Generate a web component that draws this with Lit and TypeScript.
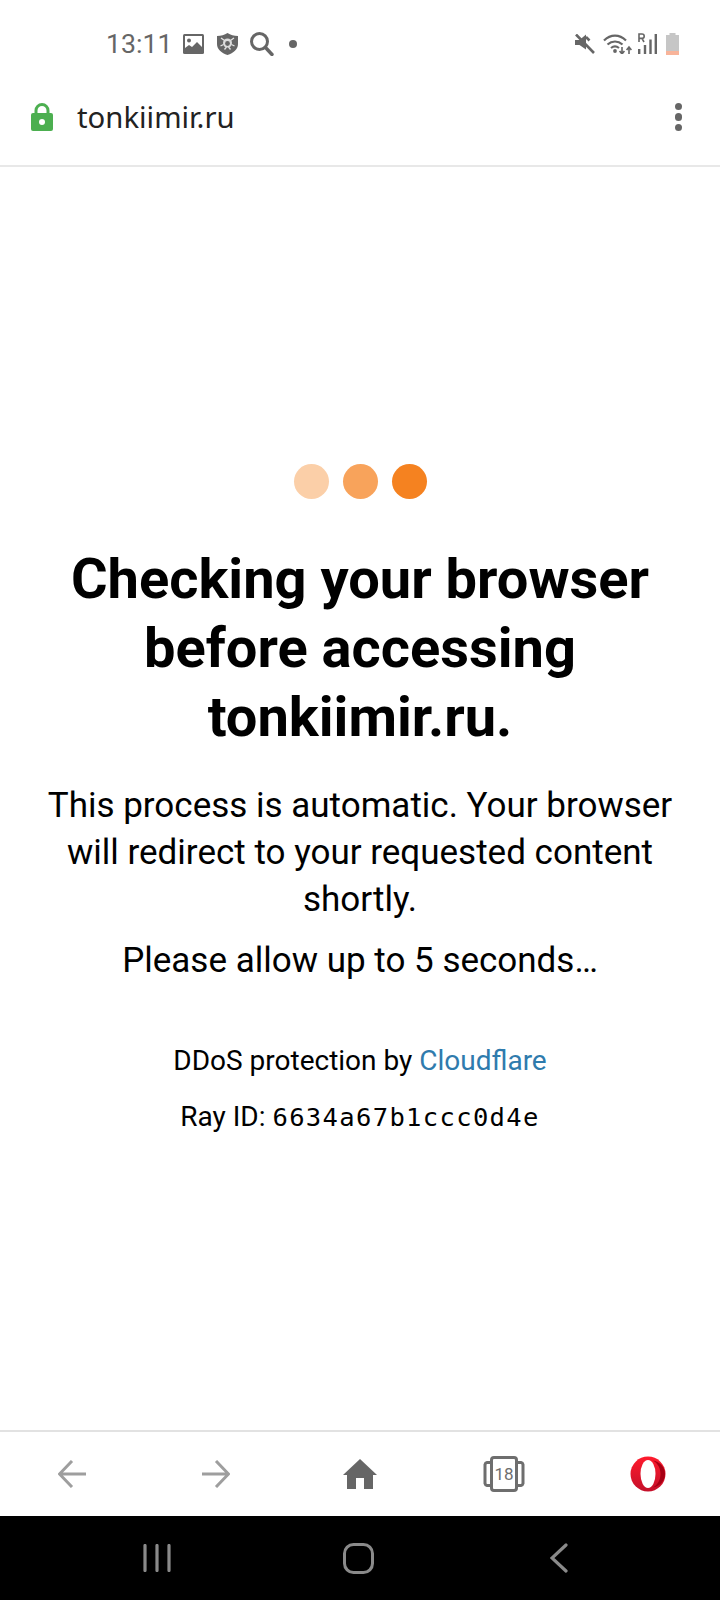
import { LitElement, html, css } from "lit";
import { customElement } from "lit/decorators.js";

@customElement("app-root")
export class AppRoot extends LitElement {
  static styles = css`
    :host { display: block; width: 720px; height: 1600px; background: #fff; font-family: Roboto, sans-serif; color: #000; overflow: hidden; }
    .page { display: flex; flex-direction: column; height: 1600px; }
    .status { height: 78px; flex: none; display: flex; align-items: center; padding: 10px 0 0 106px; box-sizing: border-box; color: #666; }
    .time { font-size: 26.7px; width: 77px; color: #666; line-height: 1; }
    .status svg { display: block; flex: none; }
    .left-icons { display: flex; align-items: center; }
    .lion { margin-left: 13px; }
    .search { margin-left: 12px; }
    .sdot { margin-left: 17px; }
    .right-icons { margin-left: auto; margin-right: 41px; display: flex; align-items: center; }
    .wifi { margin-left: 8px; }
    .signal { margin-left: 6px; }
    .battery { margin-left: 9px; }
    .address { height: 89px; flex: none; display: flex; align-items: center; padding: 0 0 10px 31px; box-sizing: border-box; border-bottom: 2px solid #e8e8e8; }
    .url { font-family: "Noto Sans", sans-serif; font-size: 29.3px; color: #222; margin-left: 24px; }
    .menu { margin: 1px 38px 0 auto; display: flex; flex-direction: column; gap: 3px; }
    .menu i { display: block; width: 7.5px; height: 7.5px; border-radius: 50%; background: #666; }
    .content { flex: 1; display: flex; flex-direction: column; align-items: center; padding: 297px 32px 0; text-align: center; }
    .dots { display: flex; gap: 14px; margin-bottom: 46px; }
    .dot { width: 35px; height: 35px; border-radius: 50%; }
    .d1 { background: #fbcfa8; }
    .d2 { background: #f8a35b; }
    .d3 { background: #f58220; }
    h1 { margin: 0; font-size: 56px; line-height: 69px; font-weight: 700; }
    .p1 { margin: 30px 0 0; font-size: 35px; line-height: 47px; }
    .p2 { margin: 14px 0 0; font-size: 35px; line-height: 47px; }
    .p3 { margin: 57px 0 0; font-size: 28px; line-height: 40px; }
    .p3 a { color: #2f7bad; text-decoration: none; }
    .p4 { margin: 16px 0 0; font-size: 28px; line-height: 40px; }
    .mono { font-family: "DejaVu Sans Mono", monospace; font-size: 25.5px; letter-spacing: 1.35px; }
    .toolbar { height: 84px; flex: none; border-top: 2px solid #e2e2e2; display: grid; grid-template-columns: repeat(5, 144px); align-items: center; justify-items: center; }
    .toolbar svg { display: block; }
    .nav { height: 84px; flex: none; background: #000; display: flex; align-items: center; justify-content: center; padding-right: 4px; box-sizing: border-box; }
    .nav-cell { width: 201px; flex: none; display: flex; justify-content: center; }
  `;

  render() {
    return html`
      <div class="page">
        <div class="status">
          <span class="time">13:11</span>
          <div class="left-icons">
            <svg width="21" height="20" viewBox="0 0 21 20"><rect width="21" height="20" rx="1.500" fill="#666"/><rect x="2" y="2" width="17" height="16" fill="#fff"/><circle cx="6" cy="6.500" r="2" fill="#666"/><path d="M2 18v-4l4-3 3 2 5-5 5 5v5z" fill="#666"/></svg>
            <svg class="lion" width="21" height="22" viewBox="0 0 21 22"><path d="M10.500 0c3 2 6.500 3 10.500 3v8c0 5.500-4.500 9-10.500 11C4.500 20 0 16.500 0 11V3c4 0 7.500-1 10.500-3z" fill="#666"/><circle cx="10.500" cy="10" r="4.500" fill="#ddd"/><circle cx="10.500" cy="10.500" r="2.400" fill="#666"/><path d="M4 5l3.500 2.500M17 5l-3.500 2.500M3.500 13l3-1.500M17.500 13l-3-1.500M7.500 16.500l2-2.500M13.500 16.500l-2-2.500" stroke="#e4e4e4" stroke-width="1.300"/></svg>
            <svg class="search" width="24" height="24" viewBox="0 0 24 24"><circle cx="9.500" cy="9.500" r="8" fill="none" stroke="#666" stroke-width="3"/><path d="M15.500 15.500l6.500 7" stroke="#666" stroke-width="3.400" stroke-linecap="round"/></svg>
            <svg class="sdot" width="8" height="8" viewBox="0 0 8 8" style="margin-left:15px"><circle cx="4" cy="4" r="4" fill="#666"/></svg>
          </div>
          <div class="right-icons">
            <svg width="20" height="20" viewBox="0 0 20 20"><path d="M0 6h4.500L11 .5v15L4.500 11H0z" fill="#666"/><path d="M11 3l3.500 3.500M1 .5l18 18.500" stroke="#666" stroke-width="2.600" fill="none"/></svg>
            <svg class="wifi" width="29" height="20" viewBox="0 0 29 20"><path d="M1 6.500c6.500-6.500 15.500-6.500 22 0M4.500 10.500c4.500-4 10.500-4 15 0M8 14c2.500-2 5.500-2 8 0" stroke="#666" stroke-width="2.200" fill="none"/><circle cx="12" cy="17" r="1.900" fill="#666"/><path d="M19 13v6.500m-2.400-2.500l2.400 3 2.400-3M26 20v-6.500m-2.400 2.500l2.400-3 2.400 3" stroke="#666" stroke-width="1.600" fill="none"/></svg>
            <svg class="signal" width="19" height="22" viewBox="0 0 19 22"><path d="M1.200 21v-5M7 21v-9M12.500 21V6.500M17.800 21V1" stroke="#666" stroke-width="2.400"/><path d="M1 9V1h3a2.200 2.200 0 0 1 0 4.400H1M4 5.400L6 9" stroke="#666" stroke-width="1.600" fill="none"/></svg>
            <svg class="battery" width="13" height="22" viewBox="0 0 13 22"><path d="M3.500 0h6v2H13v20H0V2h3.500z" fill="#c6c6c6"/><rect y="18" width="13" height="4" fill="#f8b49a"/></svg>
          </div>
        </div>
        <div class="address">
          <svg width="22" height="28" viewBox="0 0 22 28"><path d="M5 12V7.500a6 6 0 0 1 12 0V12" fill="none" stroke="#4caf50" stroke-width="3"/><rect y="10" width="22" height="18" rx="2" fill="#4caf50"/><circle cx="11" cy="19" r="3" fill="#fff"/></svg>
          <span class="url">tonkiimir.ru</span>
          <div class="menu"><i></i><i></i><i></i></div>
        </div>
        <div class="content">
          <div class="dots"><div class="dot d1"></div><div class="dot d2"></div><div class="dot d3"></div></div>
          <h1>Checking your browser before accessing tonkiimir.ru.</h1>
          <p class="p1">This process is automatic. Your browser will redirect to your requested content shortly.</p>
          <p class="p2">Please allow up to 5 seconds…</p>
          <div class="p3">DDoS protection by <a href="#">Cloudflare</a></div>
          <div class="p4">Ray ID: <span class="mono">6634a67b1ccc0d4e</span></div>
        </div>
        <div class="toolbar">
          <svg width="28" height="28" viewBox="0 0 28 28"><path d="M28 14H3M14 1L1.500 14 14 27" fill="none" stroke="#9e9e9e" stroke-width="3"/></svg>
          <svg width="28" height="28" viewBox="0 0 28 28"><path d="M0 14h25M14 1l12.500 13L14 27" fill="none" stroke="#9e9e9e" stroke-width="3"/></svg>
          <svg width="34" height="30" viewBox="0 0 34 30" style="margin-top:-1px"><path d="M17 0l17 16h-4v14H21V19h-8v11H4V16H0z" fill="#666"/></svg>
          <svg width="42" height="36" viewBox="0 0 42 36"><path d="M8 6.500H4a2.500 2.500 0 0 0-2 2v19a2.500 2.500 0 0 0 2 2h4M34 6.500h4a2.500 2.500 0 0 1 2 2v19a2.500 2.500 0 0 1-2 2h-4" fill="none" stroke="#6e6e6e" stroke-width="3"/><rect x="8.500" y="1.500" width="25" height="33" rx="2.500" fill="#fff" stroke="#6e6e6e" stroke-width="3"/><text x="21" y="24" font-size="17" text-anchor="middle" fill="#6e6e6e" font-family="Roboto, sans-serif">18</text></svg>
          <svg width="36" height="36" viewBox="0 0 36 36"><defs><linearGradient id="op" x1="0" y1="0" x2="0" y2="1"><stop offset="0" stop-color="#ff1b2d"/><stop offset="1" stop-color="#c4102a"/></linearGradient></defs><circle cx="18" cy="18" r="17.500" fill="url(#op)"/><ellipse cx="18" cy="18" rx="7.500" ry="14" fill="#fff"/><path d="M23 4.500c5 3 7.500 8 7.500 13.500S28 28.500 23 31.500c6-1 12-6 12-13.500S29 5.500 23 4.500z" fill="#a70014"/></svg>
        </div>
        <div class="nav">
          <div class="nav-cell"><svg width="28" height="28" viewBox="0 0 28 28"><path d="M2 1.500v25M14 1.500v25M26 1.500v25" stroke="#8a8a8a" stroke-width="3.200" stroke-linecap="round"/></svg></div>
          <div class="nav-cell"><svg width="31" height="31" viewBox="0 0 31 31"><rect x="1.500" y="1.500" width="28" height="28" rx="9" fill="none" stroke="#8a8a8a" stroke-width="3"/></svg></div>
          <div class="nav-cell"><svg width="18" height="30" viewBox="0 0 18 30"><path d="M16 2L2 15l14 13" fill="none" stroke="#8a8a8a" stroke-width="3.200" stroke-linecap="round"/></svg></div>
        </div>
      </div>
    `;
  }
}
